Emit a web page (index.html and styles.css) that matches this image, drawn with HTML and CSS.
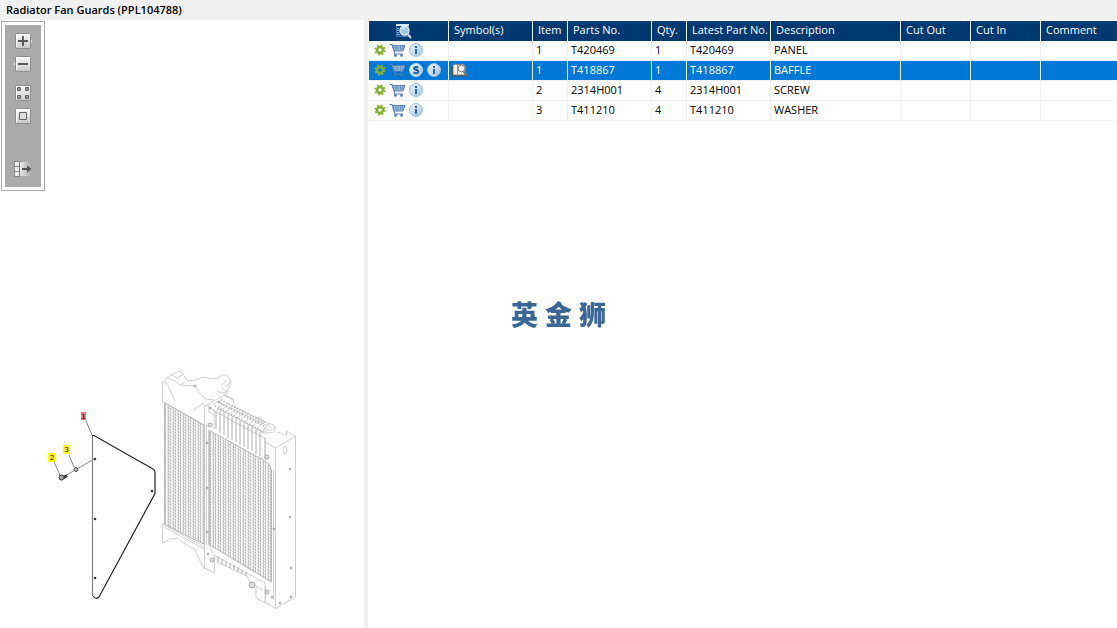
FILE: index.html
```
<!DOCTYPE html>
<html lang="en">
<head>
    <meta charset="UTF-8">
    <meta name="viewport" content="width=device-width, initial-scale=1.0">
    <title>Radiator Fan Guards (PPL104788)</title>
    <link rel="stylesheet" href="styles.css">
</head>
<body>
    <!-- Shared icons -->
    <svg class="icon-defs" aria-hidden="true">
        <defs>
            <linearGradient id="key-fill" x1="0" y1="0" x2="0" y2="1">
                <stop offset="0" stop-color="#fafafa"/>
                <stop offset="1" stop-color="#c9c9c9"/>
            </linearGradient>
            <linearGradient id="ball-fill" x1="0" y1="0" x2="1" y2="1">
                <stop offset="0" stop-color="#f0f6fc"/>
                <stop offset="1" stop-color="#9fc3e2"/>
            </linearGradient>
            <linearGradient id="fade-fill" x1="0" y1="0" x2="1" y2="0">
                <stop offset="0" stop-color="#e8e8e8"/>
                <stop offset="1" stop-color="#ababab"/>
            </linearGradient>
        </defs>
        <symbol id="icon-gear" viewBox="0 0 12 12">
            <circle cx="6" cy="6" r="3" fill="none" stroke="#7fb02c" stroke-width="2.4"/>
            <circle cx="6" cy="6" r="4.7" fill="none" stroke="#86b534" stroke-width="1.8" stroke-dasharray="1.9 1.79"/>
        </symbol>
        <symbol id="icon-cart" viewBox="1 0 15 16" overflow="visible">
            <path d="M0.5 2.5h2.5l3 9.5h8" fill="none" stroke="#5683b4" stroke-width="1.2"/>
            <path d="M3.5 3.5H16L14 9H5.500z" fill="#c3d8ec" stroke="#5683b4"/>
            <path d="M4 5.200h11.500M5 7h9.600M6.500 3.500l.8 5M9 3.500v5M11.500 3.500v5M14 3.500l-1 5" fill="none" stroke="#5683b4" stroke-width=".7"/>
            <circle cx="6.5" cy="13.500" r="1.300" fill="#4672a5"/>
            <circle cx="12.500" cy="13.500" r="1.300" fill="#4672a5"/>
        </symbol>
        <symbol id="icon-info" viewBox="0 0 14 14">
            <circle cx="7" cy="7" r="6.5" fill="url(#ball-fill)" stroke="#9dbedd"/>
            <path d="M6 6h2v5H6zM6 3h2v2H6z" fill="#3569a0"/>
        </symbol>
        <symbol id="icon-super" viewBox="0 0 14 14">
            <circle cx="7" cy="7" r="6.5" fill="url(#ball-fill)" stroke="#b9d6ef"/>
            <path d="M9.3 4.6C8 3.7 5 3.6 5 5.3c0 2 4.3.9 4.3 3.2C9.3 10.5 6.2 10.5 4.6 9.4" fill="none" stroke="#1d5c8f" stroke-width="1.9"/>
        </symbol>
        <symbol id="icon-find" viewBox="0 0 16 16">
            <path d="M.5 1.500h12v12H.5z" fill="#10457f" stroke="#3b7ab5"/>
            <path d="M0 1h13v2H0z" fill="#d3e6f5"/>
            <path d="M1 5.500h2M1 7.500h2M1 9.500h2M1 11.500h3" stroke="#8dbbe2"/>
            <circle cx="8.500" cy="7.500" r="4.500" fill="#a4c8e4" stroke="#e9f2f9" stroke-width="1.300"/>
            <path d="M6 7a3 3 0 0 1 3-2.500" fill="none" stroke="#e9f4fc"/>
            <path d="M12 11.500l3 3.500" stroke="#cfdfee" stroke-width="2"/>
        </symbol>
        <symbol id="icon-book" viewBox="0 0 16 14">
            <path d="M1 2.500L3 1l4 1 3-1 3 1.500V12H1z" fill="#f6f3ea" stroke="#8d8778"/>
            <path d="M.5 3v10H13" fill="none" stroke="#57503f"/>
            <path d="M5.500 2v9" stroke="#9a9488"/>
            <circle cx="9.500" cy="5.500" r="3.300" fill="#eef4f8" stroke="#85837c"/>
            <path d="M11.500 8.500l3.500 4.500" stroke="#756a5a" stroke-width="1.800"/>
        </symbol>
    </svg>

    <header class="title-bar">
        <h1>Radiator Fan Guards (PPL104788)</h1>
    </header>

    <main class="workspace">
        <section class="drawing-panel">
            <div class="toolbar">
                <button type="button" aria-label="Zoom in">
                    <svg viewBox="0 0 20 16">
                        <path d="M17 5l2.5 3-2.5 3z" fill="#eee"/>
                        <rect x="2.5" y=".5" width="15" height="15" rx="1" fill="url(#key-fill)" stroke="#8c8c8c"/>
                        <path d="M3.5 14V1.5H17" fill="none" stroke="#fff"/>
                        <path d="M5 8h10M10 3v10" stroke="#5c5c5c" stroke-width="2"/>
                    </svg>
                </button>
                <button type="button" aria-label="Zoom out">
                    <svg viewBox="0 0 20 16">
                        <path d="M3 5L.5 8 3 11z" fill="#eee"/>
                        <rect x="2.5" y=".5" width="15" height="15" rx="1" fill="url(#key-fill)" stroke="#8c8c8c"/>
                        <path d="M3.5 14V1.5H17" fill="none" stroke="#fff"/>
                        <path d="M5 8h10" stroke="#5c5c5c" stroke-width="2"/>
                    </svg>
                </button>
                <button type="button" class="spaced" aria-label="Fit to window">
                    <svg viewBox="0 0 20 16">
                        <rect x="2.5" y=".5" width="15" height="15" rx="1" fill="url(#key-fill)" stroke="#8c8c8c"/>
                        <path d="M3.5 14V1.5H17" fill="none" stroke="#fff"/>
                        <path d="M4.5 2.5h3v3h-3zM12.5 2.5h3v3h-3zM4.5 10.5h3v3h-3zM12.5 10.5h3v3h-3z" fill="#999" stroke="#606060"/>
                    </svg>
                </button>
                <button type="button" aria-label="Actual size">
                    <svg viewBox="0 0 20 16">
                        <rect x="2.5" y=".5" width="15" height="15" rx="1" fill="url(#key-fill)" stroke="#8c8c8c"/>
                        <path d="M3.5 14V1.5H17" fill="none" stroke="#fff"/>
                        <path d="M6.5 4.5h7v7h-7z" fill="#ddd" stroke="#606060"/>
                    </svg>
                </button>
                <button type="button" class="export" aria-label="Move panel">
                    <svg viewBox="0 0 20 16">
                        <path d="M7 1h11v14H7z" fill="url(#fade-fill)"/>
                        <path d="M1 0h5v16H1z" fill="#8a8a8a"/>
                        <path d="M2 1h4v4H2zM2 6h4v4H2zM2 11h4v4H2z" fill="#eee"/>
                        <path d="M6.5 0v16" stroke="#777"/>
                        <path d="M9 8h7" stroke="#505050" stroke-width="2"/>
                        <path d="M14 4.500L18.500 8 14 11.500z" fill="#505050"/>
                    </svg>
                </button>
            </div>

            <svg class="drawing" viewBox="45 367 255 245" role="img" aria-label="Radiator and fan guard exploded view">
                <defs>
                    <pattern id="mesh" width="5" height="3" patternUnits="userSpaceOnUse">
                        <rect width="5" height="3" fill="#f6f6f6"/>
                        <path d="M.5 0v3M3.5 0v3" stroke="#d6d6d6"/>
                        <path d="M.5 0v2M3.5 2v1M3.500 0v1" stroke="#bcbcbc"/>
                        <path d="M2 2h1M4 0h1" stroke="#ccc"/>
                    </pattern>
                </defs>

                <!-- Radiator core -->
                <path d="M164.500 402.500L204.500 425.500V544.500L164.500 524.500z" fill="url(#mesh)" stroke="#bbb"/>
                <path d="M209.500 430.500L258 457Q271 462 271.500 471V582L209.500 545z" fill="url(#mesh)" stroke="#bbb"/>

                <g class="thin">
                    <!-- Shroud -->
                    <path d="M162.500 402V382L168 377l7-4 5-2 3 3 4 7 9-1 8-3 8 2 6-1 4-3h4l4 4 1 5-3 5-2 3-5 1-4-2"/>
                    <path d="M162.500 402l42 23M163 382l4 1 8 18M168 378l7 3 5 4 15 1 7 10 4 3 8 1M180 385l5-3M193 410l11-7"/>
                    <path d="M230 382l-4 5M226 380l-4 5M222 388l5 4M228 391l-3 4M223 394l10 5 1 6M172 375l5 3 5-3"/>
                    <!-- Top tank -->
                    <path d="M204.500 426V406L224 395.500l10 5M206 406l8 4v20M209 404v8l5 3M213 405l5-4M220 403l52 25M226 403l44 21M214 411l52 28M217 408l50 26"/>
                    <path class="fins" d="M218 402l46 24M221 400l44 23M215 406l50 27"/>
                    <path class="rib" d="M216 412v17M220 411v22M224 413v22M228 415v23M232 417v23M236 419v23M240 421v24M244 423v24M248 425v24M252 427v24M256 429v25M260 432v24M265 438v21"/>
                    <path d="M216 412l7-9M220 411l8-6M224 413l8-6M228 415l8-6M232 417l8-7M236 419l8-7M240 421l8-7M244 423l8-7M248 425l8-7M252 427l8-7M256 429l7-6M260 432l7-5"/>
                    <ellipse cx="270" cy="427" rx="5" ry="3"/>
                    <path d="M265 427v4q5 4 10 0v-4M277 432l8 3 3-2M256 419q3-4 6 0l2 4"/>
                    <!-- Side frames -->
                    <path d="M204.500 425V545M208.500 430V545M206.500 425V545M265.500 442V460M265.500 442l10 6 20-12-9-5v5M275.500 448V608.500M295.500 436V597L275.500 608.500l-10-6V586M273.500 470V600"/>
                    <!-- Bottom brackets -->
                    <path d="M162.500 524V543l8-4 7-1 6 5 11 6 8 17 2 3M162.500 524l42 23M164 527l40 22M204.500 545v23l10 5v-18M209 545l4 8M214 555l51 28v20l-9-5v-11M217 562l30 14 3 6 12 8"/>
                    <path class="rib" d="M218 556v6M222 559v5M226 561v5M230 563v5M234 565v5M238 567v5M242 570v4M246 572v4"/>
                </g>
                <g class="bolts">
                    <circle cx="207" cy="443" r="1"/>
                    <circle cx="207" cy="488" r="1"/>
                    <circle cx="207" cy="532" r="1"/>
                    <circle cx="208" cy="554" r="1"/>
                    <circle cx="212" cy="560" r="2"/>
                    <circle cx="210" cy="425" r="2"/>
                    <circle cx="267" cy="457" r="2"/>
                    <circle cx="252" cy="585" r="3"/>
                    <circle cx="267" cy="592" r="2"/>
                    <circle cx="272" cy="597" r="1"/>
                    <circle cx="274" cy="529" r="1"/>
                    <circle cx="290" cy="469" r="1"/>
                    <circle cx="290" cy="517" r="1"/>
                    <circle cx="291" cy="568" r="1"/>
                    <circle cx="280" cy="603" r="1"/>
                    <circle cx="291" cy="597" r="1"/>
                    <circle cx="195" cy="386" r="1"/>
                    <circle cx="210" cy="408" r="1"/>
                    <circle cx="219" cy="402" r="1"/>
                </g>
                <ellipse class="thin" cx="285" cy="450" rx="2" ry="4"/>

                <!-- Baffle -->
                <path d="M92.500 435V596" fill="none" stroke="#777"/>
                <path d="M92 435.500h2L153 469q2 1 2 3V493.500L99 597q-3 3-6-1" fill="none" stroke="#222" stroke-width="1.200"/>
                <g fill="#333">
                    <circle cx="95" cy="459" r="1.300"/>
                    <circle cx="95" cy="519" r="1.300"/>
                    <circle cx="95" cy="578" r="1.300"/>
                    <circle cx="152" cy="491" r="1.300"/>
                </g>

                <!-- Leader lines and fasteners -->
                <path d="M86 421l6 14M69 455l5 12M54 462l6 13M65 476l29-17" fill="none" stroke="#888"/>
                <circle cx="76" cy="469.500" r="2" fill="#bbb" stroke="#444"/>
                <path d="M63 478l4-2.500" stroke="#333" stroke-width="3"/>
                <circle cx="61.500" cy="477.500" r="2.500" fill="#aaa" stroke="#333"/>

                <!-- Callouts -->
                <rect x="81" y="412" width="5" height="8" fill="#f77a7a"/>
                <rect x="63" y="445" width="7" height="9" fill="#ff0"/>
                <rect x="48" y="453" width="8" height="9" fill="#ff0"/>
                <text x="83.500" y="419">1</text>
                <text x="66.500" y="452">3</text>
                <text x="52" y="460">2</text>
            </svg>
        </section>

        <section class="parts-panel">
            <table class="parts">
                <colgroup>
                    <col class="col-actions">
                    <col class="col-medium">
                    <col class="col-small">
                    <col class="col-medium">
                    <col class="col-small">
                    <col class="col-medium">
                    <col class="col-description">
                    <col class="col-cut">
                    <col class="col-cut">
                    <col>
                </colgroup>
                <thead>
                    <tr>
                        <th class="find"><button type="button" aria-label="Find"><svg width="16" height="16"><use href="#icon-find"/></svg></button></th>
                        <th>Symbol(s)</th>
                        <th>Item</th>
                        <th>Parts No.</th>
                        <th>Qty.</th>
                        <th>Latest Part No.</th>
                        <th>Description</th>
                        <th>Cut Out</th>
                        <th>Cut In</th>
                        <th>Comment</th>
                    </tr>
                </thead>
                <tbody>
                    <tr>
                        <td>
                            <div class="actions">
                                <button type="button" aria-label="Options"><svg width="12" height="12"><use href="#icon-gear"/></svg></button>
                                <button type="button" aria-label="Add to cart"><svg class="cart" width="15" height="16"><use href="#icon-cart"/></svg></button>
                                <button type="button" aria-label="Information"><svg width="14" height="14"><use href="#icon-info"/></svg></button>
                            </div>
                        </td>
                        <td></td>
                        <td>1</td>
                        <td>T420469</td>
                        <td>1</td>
                        <td>T420469</td>
                        <td>PANEL</td>
                        <td></td>
                        <td></td>
                        <td></td>
                    </tr>
                    <tr class="selected">
                        <td>
                            <div class="actions">
                                <button type="button" aria-label="Options"><svg width="12" height="12"><use href="#icon-gear"/></svg></button>
                                <button type="button" aria-label="Add to cart"><svg class="cart" width="15" height="16"><use href="#icon-cart"/></svg></button>
                                <button type="button" aria-label="Supersession"><svg width="14" height="14"><use href="#icon-super"/></svg></button>
                                <button type="button" aria-label="Information"><svg width="14" height="14"><use href="#icon-info"/></svg></button>
                            </div>
                        </td>
                        <td>
                            <div class="symbols">
                                <button type="button" aria-label="View notes"><svg width="16" height="14"><use href="#icon-book"/></svg></button>
                            </div>
                        </td>
                        <td>1</td>
                        <td>T418867</td>
                        <td>1</td>
                        <td>T418867</td>
                        <td>BAFFLE</td>
                        <td></td>
                        <td></td>
                        <td></td>
                    </tr>
                    <tr>
                        <td>
                            <div class="actions">
                                <button type="button" aria-label="Options"><svg width="12" height="12"><use href="#icon-gear"/></svg></button>
                                <button type="button" aria-label="Add to cart"><svg class="cart" width="15" height="16"><use href="#icon-cart"/></svg></button>
                                <button type="button" aria-label="Information"><svg width="14" height="14"><use href="#icon-info"/></svg></button>
                            </div>
                        </td>
                        <td></td>
                        <td>2</td>
                        <td>2314H001</td>
                        <td>4</td>
                        <td>2314H001</td>
                        <td>SCREW</td>
                        <td></td>
                        <td></td>
                        <td></td>
                    </tr>
                    <tr>
                        <td>
                            <div class="actions">
                                <button type="button" aria-label="Options"><svg width="12" height="12"><use href="#icon-gear"/></svg></button>
                                <button type="button" aria-label="Add to cart"><svg class="cart" width="15" height="16"><use href="#icon-cart"/></svg></button>
                                <button type="button" aria-label="Information"><svg width="14" height="14"><use href="#icon-info"/></svg></button>
                            </div>
                        </td>
                        <td></td>
                        <td>3</td>
                        <td>T411210</td>
                        <td>4</td>
                        <td>T411210</td>
                        <td>WASHER</td>
                        <td></td>
                        <td></td>
                        <td></td>
                    </tr>
                </tbody>
            </table>
        </section>
    </main>

    <div class="watermark" lang="zh-CN"><span>英</span><span>金</span><span>狮</span></div>
</body>
</html>
```

FILE: styles.css
```
* {
    box-sizing: border-box;
}

body {
    display: flex;
    flex-direction: column;
    min-height: 100vh;
    margin: 0;
    background-color: #fff;
    color: #000;
    font-family: "Open Sans", "Noto Sans", sans-serif;
    font-size: 11px;
}

button {
    display: block;
    padding: 0;
    border: none;
    background: none;
    cursor: pointer;
}

svg {
    display: block;
}

.icon-defs {
    position: absolute;
    width: 0;
    height: 0;
}

/* Title */
.title-bar {
    padding: 0 6px;
    background-color: #f0f0f0;
}

.title-bar h1 {
    margin: 0;
    font-size: 11px;
    font-weight: 600;
    line-height: 20px;
}

.workspace {
    display: grid;
    grid-template-columns: 368px 1fr;
    flex: 1;
}

/* Drawing side */
.drawing-panel {
    display: flex;
    flex-direction: column;
    justify-content: space-between;
    align-items: flex-start;
    padding: 1px 0 16px 1px;
    border-right: 4px solid #f0f0f0;
}

.toolbar {
    display: flex;
    flex-direction: column;
    align-items: center;
    gap: 7px;
    width: 44px;
    padding: 11px 0 13px;
    border: 1px solid #aaa;
    background-color: #aaa;
    box-shadow: inset 0 0 0 3px #fff;
}

.toolbar svg {
    width: 20px;
    height: 16px;
}

.toolbar .spaced {
    margin-top: 6px;
}

.toolbar .export {
    margin-top: 30px;
}

.drawing {
    width: 255px;
    height: 245px;
    margin-left: 44px;
}

.drawing .thin {
    fill: none;
    stroke: #c4c4c4;
    stroke-width: 0.8;
}

.drawing .rib {
    stroke: #999;
}

.drawing .fins {
    stroke: #aaa;
    stroke-width: 2;
    stroke-dasharray: 1 2;
}

.drawing .bolts {
    fill: #ddd;
    stroke: #999;
    stroke-width: 0.8;
}

.drawing text {
    font-family: "Liberation Sans", sans-serif;
    font-size: 8px;
    text-anchor: middle;
}

/* Parts list */
.parts-panel {
    padding: 1px 0 0 1px;
}

.parts {
    width: 100%;
    table-layout: fixed;
    border-collapse: separate;
    border-spacing: 0;
}

.col-actions {
    width: 80px;
}

.col-small {
    width: 35px;
}

.col-medium {
    width: 84px;
}

.col-description {
    width: 130px;
}

.col-cut {
    width: 70px;
}

.parts th,
.parts td {
    height: 20px;
    border-right: 1px solid #f0f0f0;
    text-align: left;
    vertical-align: top;
    white-space: nowrap;
}

.parts th {
    padding: 0 0 0 5px;
    background-color: #003a70;
    color: #fff;
    font-weight: normal;
    line-height: 18px;
}

.parts td {
    padding: 0 0 0 3px;
    border-bottom: 1px solid #f0f0f0;
    line-height: 17px;
}

.parts th:last-child,
.parts td:last-child {
    border-right: none;
}

.parts th.find {
    padding: 2px 0 0 27px;
}

.parts .selected td {
    background-color: #0078d7;
    color: #fff;
}

.actions,
.symbols {
    display: flex;
    align-items: center;
    height: 18px;
}

.actions {
    gap: 4px;
    padding-left: 2px;
}

.cart {
    overflow: visible;
}

/* Watermark */
.watermark {
    display: flex;
    gap: 7px;
    position: fixed;
    top: 50%;
    left: 50%;
    transform: translate(-50%, -50%);
    color: #3b6796;
    font-family: "Noto Sans CJK SC", sans-serif;
    font-size: 27px;
    font-weight: 900;
    line-height: 28px;
    pointer-events: none;
}
```
